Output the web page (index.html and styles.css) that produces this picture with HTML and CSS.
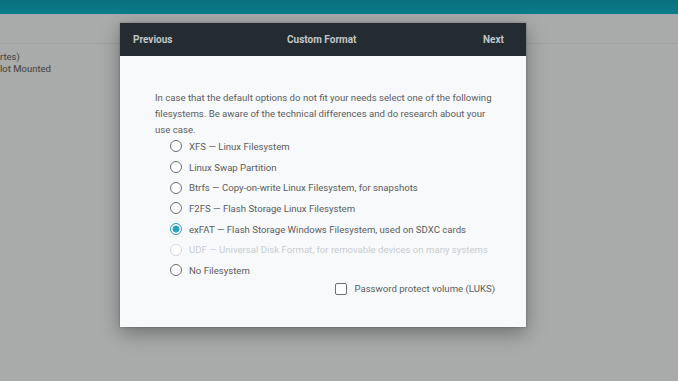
FILE: index.html
```html
<!doctype html>
<html lang="en">
<head>
  <meta charset="UTF-8" />
  <title>Custom Format</title>
  <link rel="stylesheet" href="styles.css">
</head>
<body>
  <!-- Window behind the dialog -->
  <div class="topbar"></div>
  <div class="backdrop">
    <div class="toolbar-row"></div>
    <div class="volume-info">
      <p>rtes)</p>
      <p>lot Mounted</p>
    </div>
  </div>

  <!-- Dialog -->
  <div class="dialog">
    <div class="dialog-header">
      <span class="header-btn">Previous</span>
      <span class="header-title">Custom Format</span>
      <span class="header-btn">Next</span>
    </div>
    <div class="dialog-body">
      <p class="intro">
        In case that the default options do not fit your needs select one of the following<br>
        filesystems. Be aware of the technical differences and do research about your<br>
        use case.
      </p>
      <ul class="fs-list">
        <li class="fs-item"><span class="radio"></span>XFS — Linux Filesystem</li>
        <li class="fs-item"><span class="radio"></span>Linux Swap Partition</li>
        <li class="fs-item"><span class="radio"></span>Btrfs — Copy-on-write Linux Filesystem, for snapshots</li>
        <li class="fs-item"><span class="radio"></span>F2FS — Flash Storage Linux Filesystem</li>
        <li class="fs-item checked"><span class="radio"></span>exFAT — Flash Storage Windows Filesystem, used on SDXC cards</li>
        <li class="fs-item disabled"><span class="radio"></span>UDF — Universal Disk Format, for removable devices on many systems</li>
        <li class="fs-item"><span class="radio"></span>No Filesystem</li>
      </ul>
      <div class="luks">
        <span class="checkbox"></span>Password protect volume (LUKS)
      </div>
    </div>
  </div>
</body>
</html>
```

FILE: styles.css
```css
/* ------------------ Reset & Globals ------------------ */
* {
  margin: 0;
  padding: 0;
  box-sizing: border-box;
}
body {
  font-family: Roboto, 'Noto Sans', sans-serif;
  background: #a9aaaa;
  color: #555;
  width: 678px;
  height: 381px;
  overflow: hidden;
  position: relative;
}

/* ------------------ Window behind ------------------ */
.topbar {
  height: 14px;
  background: linear-gradient(#0a6f7e, #0b7d8c);
}
.toolbar-row {
  height: 30px;
  border-bottom: 1px solid #9d9e9e;
}
.volume-info {
  padding-top: 7px;
  font-size: 9.5px;
  line-height: 12px;
  color: #3f4141;
}

/* ------------------ Dialog ------------------ */
.dialog {
  position: absolute;
  left: 120px;
  top: 23px;
  width: 406px;
  height: 304px;
  background: #f8f9fb;
  box-shadow: 0 6px 18px rgba(0, 0, 0, 0.35), 0 0 2px rgba(0, 0, 0, 0.3);
  display: flex;
  flex-direction: column;
}
.dialog-header {
  height: 33px;
  background: #252c31;
  display: flex;
  align-items: center;
  justify-content: space-between;
  padding: 0 22px 0 13px;
  font-size: 10px;
  font-weight: bold;
  color: #c3c7ca;
}
.header-title {
  margin-left: -12px;
}
.dialog-body {
  flex: 1;
  padding: 34px 10px 0 35px;
  font-size: 9.6px;
}
.intro {
  line-height: 16px;
  color: #5a5d60;
  white-space: nowrap;
}
.fs-list {
  list-style: none;
  margin-top: -2px;
  padding-left: 15px;
}
.fs-item {
  display: flex;
  align-items: center;
  gap: 7px;
  height: 20.7px;
  color: #5a5d60;
}
.radio {
  width: 12px;
  height: 12px;
  border: 1.5px solid #6b6e71;
  border-radius: 50%;
  background: #fff;
  flex-shrink: 0;
}
.fs-item.checked .radio {
  border-color: #2aa3c2;
  background: radial-gradient(circle, #2aa3c2 0 3.2px, #fff 3.8px);
}
.fs-item.disabled {
  color: #c9cdd1;
}
.fs-item.disabled .radio {
  border-color: #d3d6d9;
}
.luks {
  display: flex;
  align-items: center;
  justify-content: flex-end;
  gap: 7px;
  margin-top: 2px;
  padding-right: 21px;
  color: #5a5d60;
}
.checkbox {
  width: 12px;
  height: 12px;
  border: 1.5px solid #6b6e71;
  border-radius: 2px;
  background: #fff;
}
```
